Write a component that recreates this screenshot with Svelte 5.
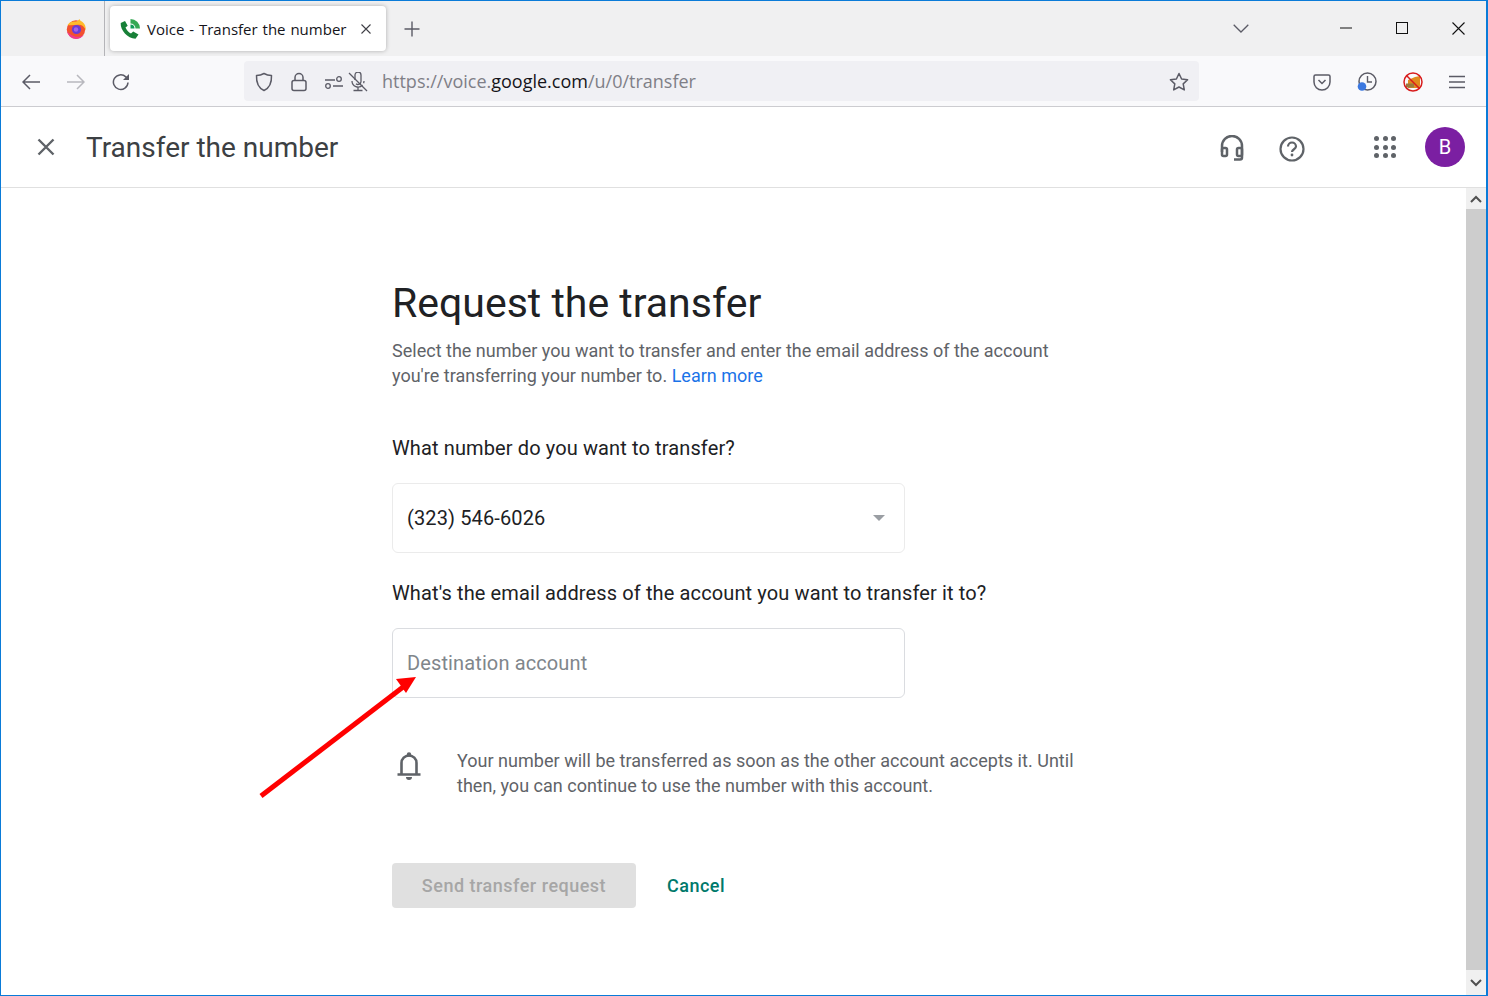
<script lang="ts">
	let destination = $state('');
	const phone = '(323) 546-6026';
	const appDots = [0, 1, 2, 3, 4, 5, 6, 7, 8];
</script>

<div class="window">
	<div class="tabstrip">
		<div class="firefox">
			<svg width="20" height="20" viewBox="0 0 20 20">
				<circle cx="10" cy="10.500" r="9.200" fill="#f2502f" />
				<path d="M1.500 6c2-3 5-4 7.500-3.500C11 3 12 1.500 13.500 0c.3 1.500 1.500 2 3 3 2.200 1.500 3.500 4.500 3.300 8.500-1-3-2.500-4.500-5-5.500C10 5 6 7 1.500 6z" fill="#ffbb2c" />
				<path d="M1 12c1 5 5 8 9 8 3 0 6-1.500 8-4.500-3 2.500-7 3-10 1.500C5 16 2.500 14.500 1 12z" fill="#ef3a8e" />
				<circle cx="10.500" cy="10.500" r="4.600" fill="#6a3bd6" />
				<circle cx="10" cy="10.500" r="2.200" fill="#a560ea" />
			</svg>
		</div>
		<div class="tab">
			<svg class="favicon" width="20" height="20" viewBox="0 0 20 20">
				<path d="M10.500 0a9.500 9.500 0 0 1 9.500 9.500h-4.500a5 5 0 0 0-5-5z" fill="#34a853" />
				<path d="M5 2 .7 4C.2 11 7.500 19.500 15.500 19.800l3-4.300-5.300-3-2.200 2c-2.500-1-4.500-3.500-5.500-6l2.200-1.800z" fill="#188038" />
				<path d="M10.500 5.500v4h4a4 4 0 0 0-4-4z" fill="#0f9d58" />
			</svg>
			<span class="tab-title">Voice - Transfer the number</span>
			<svg class="tab-close" width="10" height="10" viewBox="0 0 10 10">
				<path d="M.5.5l9 9M9.500.5l-9 9" stroke="#3f3f46" stroke-width="1.100" fill="none" />
			</svg>
		</div>
		<svg class="newtab" width="16" height="16" viewBox="0 0 16 16">
			<path d="M8 .5v15M.5 8h15" stroke="#5b5b66" stroke-width="1.400" fill="none" />
		</svg>
		<svg class="tablist" width="16" height="9" viewBox="0 0 16 9">
			<path d="M.7.7 8 8l7.300-7.300" stroke="#5b5b66" stroke-width="1.300" fill="none" />
		</svg>
		<div class="winctl">
			<svg width="12" height="12" viewBox="0 0 12 12"><path d="M0 6h12" stroke="#111" stroke-width="1" fill="none" /></svg>
			<svg width="12" height="12" viewBox="0 0 12 12"><rect x=".5" y=".5" width="11" height="11" stroke="#111" fill="none" /></svg>
			<svg width="13" height="13" viewBox="0 0 13 13"><path d="M.5.5l12 12M12.500.5l-12 12" stroke="#111" stroke-width="1.100" fill="none" /></svg>
		</div>
	</div>

	<div class="toolbar">
		<div class="nav">
			<svg width="18" height="16" viewBox="0 0 18 16"><path d="M8 1 1 8l7 7M1 8h17" stroke="#5b5b66" stroke-width="1.500" fill="none" /></svg>
			<svg width="18" height="16" viewBox="0 0 18 16"><path d="M10 1l7 7-7 7M17 8H0" stroke="#b8b8be" stroke-width="1.500" fill="none" /></svg>
			<svg width="18" height="18" viewBox="0 0 18 18"><path d="M16 9.500a7.300 7.300 0 1 1-2.200-5.600L16 6" stroke="#5b5b66" stroke-width="1.500" fill="none" /><path d="M17 1v6h-6z" fill="#5b5b66" /></svg>
		</div>
		<div class="urlbar">
			<svg class="shield" width="18" height="20" viewBox="0 0 18 20"><path d="M9 1.500c2.500 1.500 5 2 7.500 2 .3 7-2 12.500-7.500 15-5.500-2.500-7.800-8-7.500-15 2.500 0 5-.5 7.500-2z" stroke="#5b5b66" stroke-width="1.500" fill="none" stroke-linejoin="round" /></svg>
			<svg class="lock" width="16" height="20" viewBox="0 0 16 20"><rect x="1" y="8.500" width="14" height="10" rx="2" stroke="#5b5b66" stroke-width="1.500" fill="none" /><path d="M4 8.500V5.500a4 4 0 0 1 8 0v3" stroke="#5b5b66" stroke-width="1.500" fill="none" /></svg>
			<svg class="perm" width="18" height="14" viewBox="0 0 18 14"><path d="M0 5h10M8 11h10" stroke="#5b5b66" stroke-width="1.300" fill="none" /><circle cx="14" cy="4" r="2.300" stroke="#5b5b66" stroke-width="1.300" fill="none" /><circle cx="3" cy="11" r="2.300" stroke="#5b5b66" stroke-width="1.300" fill="none" /></svg>
			<svg class="mic" width="20" height="20" viewBox="0 0 20 20"><path d="M1 1l18 18" stroke="#5b5b66" stroke-width="1.300" fill="none" /><path d="M7 3a3 3 0 0 1 6 0v6.500a3 3 0 0 1-5 2.200M7 3v5M4 9a6 6 0 0 0 10.500 4M16 9c0 1-.2 1.500-.4 2.200M10 15v3.500M5.500 18.500h9" stroke="#5b5b66" stroke-width="1.300" fill="none" /></svg>
			<span class="url">https://voice.<b>google.com</b>/u/0/transfer</span>
			<svg class="star" width="20" height="20" viewBox="0 0 20 20"><path d="M10 1.500l2.600 5.500 6 .8-4.400 4.100 1.100 6-5.300-2.900-5.300 2.900 1.100-6L1.400 7.800l6-.8z" stroke="#5b5b66" stroke-width="1.500" fill="none" stroke-linejoin="round" /></svg>
		</div>
		<div class="extensions">
			<svg width="18" height="18" viewBox="0 0 18 18"><path d="M2.500 2h13A1.500 1.500 0 0 1 17 3.500V9a8 8 0 0 1-16 0V3.500A1.500 1.500 0 0 1 2.500 2z" stroke="#5b5b66" stroke-width="1.500" fill="none" /><path d="M5.500 7 9 10.500 12.500 7" stroke="#5b5b66" stroke-width="1.500" fill="none" /></svg>
			<svg width="20" height="20" viewBox="0 0 20 20"><circle cx="10.500" cy="9.500" r="8.500" stroke="#5b5b66" stroke-width="1.500" fill="none" /><path d="M10.500 4v6h4.500" stroke="#5b5b66" stroke-width="1.400" fill="none" /><circle cx="5" cy="14.500" r="4.300" fill="#3b78e0" /></svg>
			<svg width="20" height="20" viewBox="0 0 20 20"><path d="M5 8l7-3 5-1v9a3 3 0 0 1-3 3H5z" fill="#e08a1e" /><path d="M3 11.500h8v4H3z" fill="#9a7a3f" /><circle cx="10" cy="10" r="9" stroke="#d81c1c" stroke-width="1.500" fill="none" /><path d="M3.500 3.500l13 13" stroke="#d81c1c" stroke-width="1.500" /></svg>
			<svg width="16" height="14" viewBox="0 0 16 14"><path d="M0 1.500h16M0 7h16M0 12.500h16" stroke="#5b5b66" stroke-width="1.500" fill="none" /></svg>
		</div>
	</div>

	<header class="appbar">
		<svg class="close" width="18" height="18" viewBox="0 0 18 18"><path d="M1.500 1.500l15 15M16.500 1.500l-15 15" stroke="#5f6368" stroke-width="2.400" fill="none" /></svg>
		<h1>Transfer the number</h1>
		<div class="actions">
			<svg class="support" width="24" height="28" viewBox="0 0 24 28">
				<path d="M2 17V11a10 10 0 0 1 20 0v11.500a2 2 0 0 1-2 2h-6" stroke="#5f6368" stroke-width="2.500" fill="none" />
				<rect x="2" y="13" width="5" height="8" rx="1.500" stroke="#5f6368" stroke-width="2.500" fill="none" />
				<rect x="17" y="13" width="5" height="8" rx="1.500" stroke="#5f6368" stroke-width="2.500" fill="none" />
			</svg>
			<svg class="help" width="26" height="26" viewBox="0 0 26 26">
				<circle cx="13" cy="13" r="11.500" stroke="#5f6368" stroke-width="2.200" fill="none" />
				<path d="M9 10.500a4 4 0 0 1 8 0c0 2.500-4 3-4 5.500" stroke="#5f6368" stroke-width="2.200" fill="none" />
				<circle cx="13" cy="19" r="1.400" fill="#5f6368" />
			</svg>
			<div class="apps">
				{#each appDots as d (d)}
					<span></span>
				{/each}
			</div>
			<div class="avatar">B</div>
		</div>
	</header>

	<div class="body">
		<main>
			<div class="content">
				<h2>Request the transfer</h2>
				<p class="intro">
					Select the number you want to transfer and enter the email address of the account
					you're transferring your number to. <a href="#learn">Learn more</a>
				</p>

				<label class="question" for="number">What number do you want to transfer?</label>
				<div class="field select" id="number">
					<span>{phone}</span>
					<i class="caret"></i>
				</div>

				<label class="question second" for="dest">What's the email address of the account you want to transfer it to?</label>
				<input class="field" id="dest" placeholder="Destination account" bind:value={destination} />

				<div class="notice">
					<svg width="24" height="30" viewBox="0 0 24 30">
						<path d="M.5 24.500h23M4.500 24.500V13a7.500 7.500 0 0 1 15 0v11.500" stroke="#5f6368" stroke-width="2.600" fill="none" />
						<circle cx="12" cy="4.500" r="2.200" fill="#5f6368" />
						<path d="M9 27h6a3 3 0 0 1-6 0z" fill="#5f6368" />
					</svg>
					<p>
						Your number will be transferred as soon as the other account accepts it. Until
						then, you can continue to use the number with this account.
					</p>
				</div>

				<div class="buttons">
					<button class="send" disabled>Send transfer request</button>
					<button class="cancel">Cancel</button>
				</div>
			</div>

			<svg class="arrow" width="160" height="124" viewBox="0 0 160 124">
				<path d="M2 120 148 8" stroke="#ff0000" stroke-width="5" fill="none" />
				<path d="M157 1l-20 2 10 14z" fill="#ff0000" />
			</svg>
		</main>

		<div class="scrollbar">
			<div class="sb-btn top">
				<svg width="12" height="8" viewBox="0 0 12 8"><path d="M1 7l5-5 5 5" stroke="#505050" stroke-width="2" fill="none" /></svg>
			</div>
			<div class="thumb"></div>
			<div class="sb-btn bottom">
				<svg width="12" height="8" viewBox="0 0 12 8"><path d="M1 1l5 5 5-5" stroke="#505050" stroke-width="2" fill="none" /></svg>
			</div>
		</div>
	</div>
</div>

<style>
	:global(body) {
		margin: 0;
		background: #fff;
	}

	.window {
		box-sizing: border-box;
		width: 1488px;
		height: 996px;
		display: flex;
		flex-direction: column;
		border: 1px solid #0a7bd8;
		border-right-width: 2px;
		font-family: Roboto, "Liberation Sans", sans-serif;
		overflow: hidden;
	}

	.tabstrip {
		height: 55px;
		flex: none;
		box-sizing: border-box;
		background: #f0f0f1;
		display: flex;
		align-items: center;
	}

	.firefox {
		width: 104px;
		align-self: stretch;
		box-sizing: border-box;
		padding-right: 18px;
		border-right: 1px solid #b4b4b8;
		display: flex;
		align-items: center;
		justify-content: flex-end;
	}

	.tab {
		width: 276px;
		height: 45px;
		margin-left: 5px;
		box-sizing: border-box;
		background: #fff;
		border-radius: 4px;
		box-shadow: 0 0 4px rgba(0, 0, 0, 0.28);
		display: flex;
		align-items: center;
		padding: 0 15px 0 10px;
	}

	.favicon {
		flex: none;
	}

	.tab-title {
		margin-left: 7px;
		flex: 1;
		font: 15px "Open Sans", sans-serif;
		word-spacing: 1px;
		color: #15141a;
		white-space: nowrap;
	}

	.newtab {
		margin-left: 18px;
	}

	.tablist {
		margin-left: auto;
		margin-top: -1px;
	}

	.winctl {
		width: 237px;
		display: flex;
		align-items: center;
		justify-content: flex-end;
		gap: 44px;
		padding-right: 21px;
		box-sizing: border-box;
		margin-top: -1px;
	}

	.toolbar {
		height: 51px;
		flex: none;
		box-sizing: border-box;
		background: #f9f9fb;
		border-bottom: 1px solid #ccccd0;
		display: flex;
		align-items: center;
		padding-left: 21px;
	}

	.nav {
		width: 222px;
		display: flex;
		align-items: center;
		gap: 27px;
		flex: none;
		padding-top: 1px;
	}

	.urlbar {
		width: 955px;
		height: 40px;
		box-sizing: border-box;
		background: #f0f0f4;
		border-radius: 4px;
		display: flex;
		align-items: center;
		padding: 1px 10px 0 11px;
		flex: none;
	}

	.lock {
		margin-left: 18px;
	}

	.perm {
		margin-left: 18px;
	}

	.mic {
		margin-left: 5px;
	}

	.url {
		margin: -1px 0 0 14px;
		flex: 1;
		font: 18px "Open Sans", sans-serif;
		color: #7f7f87;
	}

	.url b {
		font-weight: 400;
		color: #15141a;
	}

	.extensions {
		flex: 1;
		display: flex;
		align-items: center;
		gap: 26px;
		padding-left: 114px;
		padding-top: 1px;
	}

	.appbar {
		height: 81px;
		flex: none;
		box-sizing: border-box;
		border-bottom: 1px solid #e0e0e0;
		display: flex;
		align-items: center;
		padding: 0 21px 0 36px;
	}

	.close {
		flex: none;
	}

	h1 {
		margin: 0 0 0 31px;
		font: 400 28px Roboto, sans-serif;
		color: #3c4043;
	}

	.actions {
		margin-left: auto;
		display: flex;
		align-items: center;
	}

	.support,
	.help {
		margin-top: 4px;
	}

	.help {
		margin-left: 35px;
	}

	.apps {
		margin-left: 69px;
		width: 22px;
		display: grid;
		grid-template-columns: repeat(3, 5px);
		gap: 3.500px;
	}

	.apps span {
		width: 5px;
		height: 5px;
		border-radius: 50%;
		background: #5f6368;
	}

	.avatar {
		margin-left: 29px;
		width: 40px;
		height: 40px;
		border-radius: 50%;
		background: #7b1fa2;
		color: #fff;
		font-size: 20px;
		display: flex;
		align-items: center;
		justify-content: center;
	}

	.body {
		flex: 1;
		min-height: 0;
		display: flex;
	}

	main {
		flex: 1;
		position: relative;
		padding: 90px 0 0 391px;
	}

	.content {
		width: 700px;
	}

	h2 {
		margin: 0;
		font: 400 41px/50px Roboto, sans-serif;
		color: #202124;
	}

	.intro {
		margin: 10px 0 0;
		width: 680px;
		font-size: 18px;
		line-height: 25px;
		letter-spacing: 0.012px;
		color: #5f6368;
	}

	.intro a {
		color: #1a73e8;
		text-decoration: none;
	}

	.question {
		display: block;
		margin-top: 47px;
		font-size: 20px;
		line-height: 26px;
		letter-spacing: 0.12px;
		color: #202124;
	}

	.question.second {
		margin-top: 27px;
	}

	.field {
		display: block;
		box-sizing: border-box;
		width: 513px;
		height: 70px;
		margin-top: 22px;
		padding: 0 14px;
		border: 1px solid #dadce0;
		border-radius: 6px;
		background: #fff;
		font: 20px Roboto, sans-serif;
		letter-spacing: 0.12px;
		color: #202124;
		outline: none;
	}

	.field::placeholder {
		color: #80868b;
		opacity: 1;
	}

	.select {
		display: flex;
		align-items: center;
		justify-content: space-between;
		margin-top: 22px;
		border-color: #ebebeb;
		padding-right: 19px;
	}

	.caret {
		width: 0;
		height: 0;
		border-left: 6px solid transparent;
		border-right: 6px solid transparent;
		border-top: 6px solid #9a9ea3;
	}

	.notice {
		display: flex;
		align-items: flex-start;
		margin-top: 50px;
		padding-left: 5px;
	}

	.notice svg {
		flex: none;
		margin-top: 2px;
	}

	.notice p {
		margin: 0 0 0 36px;
		width: 640px;
		font-size: 18px;
		line-height: 25px;
		letter-spacing: 0.025px;
		color: #5f6368;
	}

	.buttons {
		display: flex;
		align-items: center;
		margin-top: 65px;
	}

	.buttons button {
		font: 500 18px "Roboto", sans-serif;
		border: 0;
		padding: 0;
		letter-spacing: 0.5px;
		background: none;
	}

	.send {
		width: 244px;
		height: 45px;
		border-radius: 4px;
		background: #e0e0e0 !important;
		color: #a6a6a6;
	}

	.cancel {
		margin-left: 31px;
		color: #00796b;
	}

	.arrow {
		position: absolute;
		left: 258px;
		top: 488px;
	}

	.scrollbar {
		width: 20px;
		flex: none;
		display: flex;
		flex-direction: column;
		background: #f0f0f0;
	}

	.sb-btn {
		height: 21px;
		display: flex;
		align-items: center;
		justify-content: center;
		background: #f0f0f0;
	}

	.sb-btn.bottom {
		height: 25px;
	}

	.thumb {
		flex: 1;
		background: #cdcdcd;
	}
</style>
